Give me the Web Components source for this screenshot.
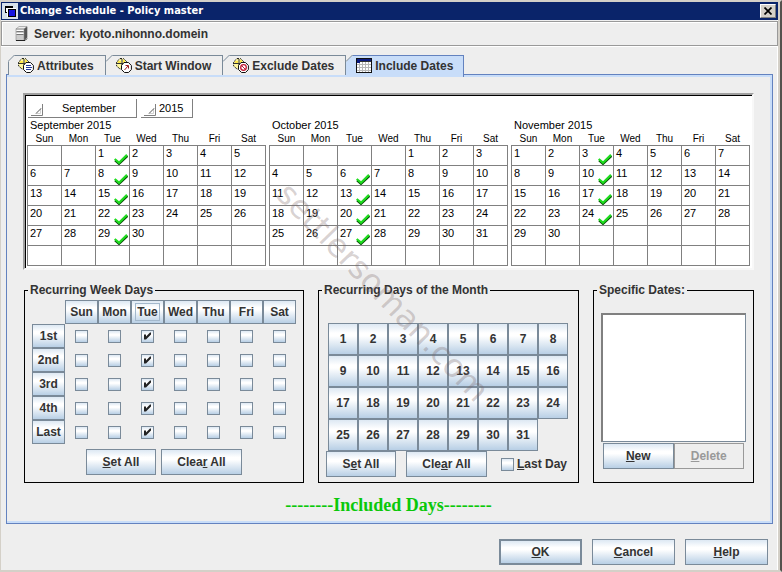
<!DOCTYPE html>
<html lang="en">
<head>
<meta charset="utf-8">
<title>Change Schedule - Policy master</title>
<style>
  body {
    margin: 0;
    font: bold 12px/14px "Liberation Sans", Arial, sans-serif;
    color: #333;
    --face: #eee;
    --edge: #7a8a99;
    --metal: linear-gradient(#dde8f3 0%, #fff 30%, #fff 40%, #b8cfe5 100%);
  }
</style>
</head>
<body>
<schedule-window></schedule-window>

<script>
// ---------- push button ----------
class MetalButton extends HTMLElement {
  constructor() {
    super();
    this.attachShadow({ mode: "open" });
  }
  connectedCallback() {
    const disabled = this.hasAttribute("disabled") ? "disabled" : "";
    this.shadowRoot.innerHTML = `
      <style>
        :host { display: grid; }
        button {
          font: inherit;
          color: inherit;
          margin: 0;
          padding: 0;
          min-width: 0;
          border: 1px solid var(--edge);
          background: var(--metal);
        }
        :host([primary]) button { border-width: 2px; }
        :host([focused]) span { outline: 1px solid #a3b8cc; outline-offset: 1px; }
        button:disabled { color: #999; background: var(--face); border-color: #999; }
      </style>
      <button type="button" ${disabled}><span><slot></slot></span></button>
    `;
  }
}
customElements.define("metal-button", MetalButton);

// ---------- tick box ----------
class MetalCheck extends HTMLElement {
  constructor() {
    super();
    this.attachShadow({ mode: "open" });
  }
  connectedCallback() {
    const checked = this.hasAttribute("checked") ? "checked" : "";
    const name = this.getAttribute("name") || "";
    const aria = name ? `aria-label="${name}"` : "";
    this.shadowRoot.innerHTML = `
      <style>
        :host { display: block; }
        label { display: flex; align-items: center; gap: 3px; }
        input {
          appearance: none;
          flex: none;
          width: 13px;
          height: 13px;
          margin: 0;
          border: 1px solid var(--edge);
          background: var(--metal);
        }
        input:checked::before {
          content: "";
          display: block;
          width: 11px;
          height: 11px;
          background: #222;
          clip-path: polygon(2px 4px, 4px 4px, 4px 6px, 8px 2px, 9px 2px, 9px 4px, 4px 9px, 2px 9px);
        }
      </style>
      <label><input type="checkbox" ${aria} ${checked}><slot></slot></label>
    `;
  }
}
customElements.define("metal-check", MetalCheck);

// ---------- title bar ----------
class TitleBar extends HTMLElement {
  constructor() {
    super();
    this.attachShadow({ mode: "open" });
    this.shadowRoot.innerHTML = `
      <style>
        :host {
          display: flex;
          align-items: center;
          gap: 2px;
          height: 18px;
          padding: 0 2px 0 1px;
          background: #0a246a;
          color: #fff;
          font: bold 11px/14px "DejaVu Sans Condensed", "DejaVu Sans", sans-serif;
        }
        h1 { flex: 1; margin: 0; font: inherit; }
        button {
          display: grid;
          place-items: center;
          width: 16px;
          height: 14px;
          padding: 0;
          border: 1px solid;
          border-color: #fff #808080 #808080 #fff;
          background: #d4d0c8;
        }
      </style>
      <svg width="16" height="16" aria-hidden="true" shape-rendering="crispEdges">
        <rect width="16" height="16" fill="#d6e0ea"/>
        <rect x="3" y="3" width="8" height="7" fill="#000"/>
        <rect x="4" y="5" width="3" height="4" fill="#fff"/>
        <rect x="5" y="5" width="9" height="9" fill="#fff"/>
        <rect x="6" y="6" width="8" height="8" fill="#000"/>
        <rect x="7" y="7" width="6" height="6" fill="#1414e0"/>
      </svg>
      <h1><slot></slot></h1>
      <button type="button" aria-label="Close">
        <svg width="8" height="8" viewBox="0 0 8 8"><path d="M0.5 0.5L7.5 7.5M7.5 0.5L0.5 7.5" stroke="#000" stroke-width="1.7"/></svg>
      </button>
    `;
  }
}
customElements.define("title-bar", TitleBar);

// ---------- server line ----------
class ServerBar extends HTMLElement {
  constructor() {
    super();
    this.attachShadow({ mode: "open" });
    this.shadowRoot.innerHTML = `
      <style>
        :host {
          display: flex;
          align-items: center;
          gap: 4px;
          height: 23px;
          margin-top: 1px;
          padding: 0 13px;
          border: 1px solid #999;
          box-shadow: inset 1px 1px #fff, 0 1px #fff;
        }
        svg { margin-right: 2px; }
      </style>
      <svg width="13" height="15" viewBox="0 0 13 15" aria-hidden="true">
        <path d="M1 3L4 0.5H12L9 3Z" fill="#eee" stroke="#888" stroke-width=".6"/>
        <path d="M9 3L12.3 0.6V11.5L9 14.5Z" fill="#555"/>
        <rect x="1" y="3" width="8" height="11.5" fill="#ccc" stroke="#888" stroke-width=".6"/>
        <path d="M1.5 5.5H8.5M1.5 8.5H8.5" stroke="#777"/>
        <path d="M1.5 4.5H8.5M1.5 7.5H8.5" stroke="#fff"/>
        <path d="M1 14.5H10L12 12.5" stroke="#222" fill="none"/>
      </svg>
      <span>Server:</span>
      <slot></slot>
    `;
  }
}
customElements.define("server-bar", ServerBar);

// ---------- tabs ----------
const clock = `
  <path d="M4 0.6H7.5L11 4V8L8 11H4L0.6 8V4Z" fill="#fff7a0" stroke="#111" stroke-dasharray="2 1"/>
  <path d="M6 1V10M1 5.5H10" stroke="#333"/>
  <path d="M2 3H5V5H2ZM7 2H9V5H7Z" fill="#ffe94a"/>
  <path d="M8 4.5H12.5L15.4 7.5V11.5L12.5 14.5H8.5L5.5 11.5V7.5Z" fill="#fff" stroke="#111"/>`;
const tabIcons = {
  list: clock + `<path d="M8 7.5H13M8 9.5H14M8 11.5H13" stroke="#223a9a"/>`,
  start: clock + `<path d="M8.5 12L12 8M9.5 7.5H12.5V10.5" stroke="#a02020" fill="none"/>`,
  exclude: clock + `<circle cx="10.5" cy="9.5" r="2.8" fill="#fff" stroke="#c01830" stroke-width="1.3"/><path d="M8.7 7.7L12.3 11.3" stroke="#c01830"/>`,
  calendar: `
    <rect x=".5" y=".5" width="15" height="14" fill="#fff" stroke="#111"/>
    <rect x="1" y="1" width="14" height="2" fill="#0a1a80"/>
    <rect x="1" y="3" width="14" height="1" fill="#333"/>
    <path d="M1 6.5H15M1 9.5H15M1 12.5H15M3.5 4V14M6.5 4V14M9.5 4V14M12.5 4V14" stroke="#b8b8b8"/>
    <path d="M1 5H4V1H1Z" fill="#0a1a80"/>`
};

class TabItem extends HTMLElement {
  constructor() {
    super();
    this.attachShadow({ mode: "open" });
  }
  connectedCallback() {
    const selected = this.hasAttribute("selected");
    this.shadowRoot.innerHTML = `
      <style>
        :host { display: grid; position: relative; }
        button {
          display: flex;
          align-items: center;
          gap: 3px;
          height: 20px;
          padding: 0 11px 0 10px;
          font: inherit;
          color: inherit;
          border: solid var(--edge);
          border-width: 1px 1px 0 0;
          background: var(--face);
          white-space: nowrap;
        }
        :host([first]) button { border-left-width: 1px; padding-left: 9px; }
        :host([selected]) button {
          background: #c8ddf9;
          border-color: #6382bf;
          height: 22px;
          padding: 0 10px 2px;
        }
        .corner { position: absolute; left: 0; top: 0; }
      </style>
      <button type="button" role="tab" aria-selected="${selected}">
        <svg width="16" height="16" viewBox="0 0 16 16" aria-hidden="true">${tabIcons[this.getAttribute("icon")]}</svg>
        <slot></slot>
      </button>
      <svg class="corner" width="7" height="7" aria-hidden="true">
        <path d="M0 0H7L0 7Z" fill="#eee"/><path d="M0 6.5L6.5 0" stroke="#7a8a99"/>
      </svg>
    `;
  }
}
customElements.define("tab-item", TabItem);

class TabStrip extends HTMLElement {
  constructor() {
    super();
    this.attachShadow({ mode: "open" });
    this.shadowRoot.innerHTML = `
      <style>
        :host { display: block; margin: 9px 5px 0; }
        div { display: flex; align-items: flex-start; height: 19px; padding-left: 2px; position: relative; z-index: 1; }
      </style>
      <div role="tablist"><slot></slot></div>
    `;
  }
}
customElements.define("tab-strip", TabStrip);

// ---------- bevelled drop-down of the calendar ----------
class CornerSelect extends HTMLElement {
  constructor() {
    super();
    this.attachShadow({ mode: "open" });
  }
  connectedCallback() {
    const value = this.getAttribute("value");
    this.shadowRoot.innerHTML = `
      <style>
        :host { display: block; }
        label {
          display: flex;
          align-items: center;
          height: 18px;
          padding-left: 3px;
          border: solid #808080;
          border-width: 0 1px 1px 0;
        }
        svg { flex: none; margin-top: 3px; }
        select {
          appearance: none;
          flex: 1;
          min-width: 0;
          height: 16px;
          padding: 0 0 0 var(--indent, 3px);
          border: 0;
          background: none;
          color: #000;
          font: inherit;
        }
      </style>
      <label>
        <svg width="12" height="12" aria-hidden="true">
          <path d="M0 11.5H11.5V0" stroke="#808080" fill="none"/>
          <path d="M5 9.5H9.5V4" stroke="#d0d0d0" fill="none"/><path d="M5 9.5L10 4.5" stroke="#555"/>
        </svg>
        <select aria-label="${this.getAttribute("name")}"><option>${value}</option></select>
      </label>
    `;
  }
}
customElements.define("corner-select", CornerSelect);

// ---------- one month ----------
const dayNames = ["Sun", "Mon", "Tue", "Wed", "Thu", "Fri", "Sat"];

class MonthCalendar extends HTMLElement {
  constructor() {
    super();
    this.attachShadow({ mode: "open" });
  }
  connectedCallback() {
    const offset = Number(this.getAttribute("offset"));
    const days = Number(this.getAttribute("days"));
    const marked = this.getAttribute("marked").split(",").map(Number);
    const tick = `<svg width="14" height="11" viewBox="0 0 14 11" aria-hidden="true"><path d="M1 6.5L5 10L13.5 2" stroke="#064d06" stroke-width="2" fill="none"/><path d="M0.7 5L5 8.7L13 0.9" stroke="#1fdc1f" stroke-width="2.2" fill="none"/></svg>`;
    let rows = "";
    for (let r = 0; r < 6; r++) {
      rows += "<tr>";
      for (let c = 0; c < 7; c++) {
        const d = r * 7 + c - offset + 1;
        const shown = d >= 1 && d <= days;
        rows += `<td>${shown ? d : ""}${marked.includes(d) ? tick : ""}</td>`;
      }
      rows += "</tr>";
    }
    this.shadowRoot.innerHTML = `
      <style>
        :host { display: block; }
        table { width: 100%; table-layout: fixed; border-collapse: collapse; }
        caption { height: 14px; padding-left: 3px; text-align: left; }
        th { height: 13px; padding: 0; font-weight: normal; font-size: 10px; line-height: 13px; }
        td {
          position: relative;
          height: 19px;
          padding: 0 0 0 2px;
          border: 1px solid #808080;
          vertical-align: top;
          line-height: 14px;
        }
        svg { position: absolute; right: 1px; bottom: 0; }
      </style>
      <table>
        <caption><slot></slot></caption>
        <thead><tr>${dayNames.map((d) => `<th>${d}</th>`).join("")}</tr></thead>
        <tbody>${rows}</tbody>
      </table>
    `;
  }
}
customElements.define("month-calendar", MonthCalendar);

class CalendarPane extends HTMLElement {
  constructor() {
    super();
    this.attachShadow({ mode: "open" });
    this.shadowRoot.innerHTML = `
      <style>
        :host {
          display: block;
          padding: 2px;
          border: 2px solid;
          border-color: #a0a0a0 #f8f8f8 #f8f8f8 #a0a0a0;
          box-shadow: inset 1px 1px #000;
          background: #fff;
          color: #000;
          font-weight: normal;
          font-size: 11px;
        }
        .pick { display: flex; gap: 4px; padding: 2px 1px 0; }
        .month { width: 109px; --indent: 19px; }
        .year { width: 52px; }
        .months { display: grid; grid-template-columns: repeat(3, 1fr); gap: 3px; }
      </style>
      <div class="pick">
        <corner-select class="month" name="Month" value="September"></corner-select>
        <corner-select class="year" name="Year" value="2015"></corner-select>
      </div>
      <div class="months">
        <month-calendar offset="2" days="30" marked="1,8,15,22,29">September 2015</month-calendar>
        <month-calendar offset="4" days="31" marked="6,13,20,27">October 2015</month-calendar>
        <month-calendar offset="0" days="30" marked="3,10,17,24">November 2015</month-calendar>
      </div>
    `;
  }
}
customElements.define("calendar-pane", CalendarPane);

// ---------- titled box ----------
class GroupBox extends HTMLElement {
  constructor() {
    super();
    this.attachShadow({ mode: "open" });
    this.shadowRoot.innerHTML = `
      <style>
        :host { display: grid; }
        fieldset {
          min-width: 0;
          margin: 0;
          padding: 0 7px 5px;
          border: 1px solid #000;
        }
        legend { margin-left: -4px; padding: 0 2px; }
      </style>
      <fieldset><legend><slot name="title"></slot></legend><slot></slot></fieldset>
    `;
  }
}
customElements.define("group-box", GroupBox);

class WeekPicker extends HTMLElement {
  constructor() {
    super();
    this.attachShadow({ mode: "open" });
    let cells = "<span></span>";
    dayNames.forEach((d) => {
      cells += `<metal-button ${d === "Tue" ? "focused" : ""}>${d}</metal-button>`;
    });
    ["1st", "2nd", "3rd", "4th", "Last"].forEach((week) => {
      cells += `<metal-button>${week}</metal-button>`;
      dayNames.forEach((d) => {
        cells += `<metal-check name="${week} ${d}" ${d === "Tue" ? "checked" : ""}></metal-check>`;
      });
    });
    this.shadowRoot.innerHTML = `
      <style>
        :host { display: block; }
        .grid {
          display: grid;
          grid-template-columns: repeat(8, 1fr);
          grid-auto-rows: 24px;
          margin-top: 3px;
        }
        metal-check { place-self: center; }
        .actions {
          display: flex;
          justify-content: center;
          gap: 5px;
          margin-top: 5px;
        }
        .actions metal-button { height: 26px; width: 70px; }
        .actions metal-button + metal-button { width: 81px; }
      </style>
      <div class="grid">${cells}</div>
      <div class="actions">
        <metal-button><u>S</u>et All</metal-button>
        <metal-button>Clea<u>r</u> All</metal-button>
      </div>
    `;
  }
}
customElements.define("week-picker", WeekPicker);

class MonthDayPicker extends HTMLElement {
  constructor() {
    super();
    this.attachShadow({ mode: "open" });
    let cells = "";
    for (let d = 1; d <= 31; d++) cells += `<metal-button>${d}</metal-button>`;
    this.shadowRoot.innerHTML = `
      <style>
        :host { display: block; }
        .grid {
          display: grid;
          grid-template-columns: repeat(8, 1fr);
          grid-auto-rows: 32px;
          margin: 26px 3px 0 2px;
        }
        .actions { display: flex; align-items: center; gap: 10px; }
        .actions metal-button { height: 26px; width: 70px; }
        .actions metal-button + metal-button { width: 81px; }
        metal-check { margin-left: 4px; white-space: nowrap; }
      </style>
      <div class="grid">${cells}</div>
      <div class="actions">
        <metal-button>S<u>e</u>t All</metal-button>
        <metal-button>Cle<u>a</u>r All</metal-button>
        <metal-check><span><u>L</u>ast Day</span></metal-check>
      </div>
    `;
  }
}
customElements.define("month-day-picker", MonthDayPicker);

class DateList extends HTMLElement {
  constructor() {
    super();
    this.attachShadow({ mode: "open" });
    this.shadowRoot.innerHTML = `
      <style>
        :host { display: block; }
        .list {
          height: 126px;
          margin-top: 16px;
          border: solid;
          border-width: 2px 1px 1px 2px;
          border-color: #808080 var(--edge) var(--edge) #808080;
          background: #fff;
        }
        .actions { display: grid; grid-template-columns: 1fr 1fr; grid-auto-rows: 26px; margin: 1px 2px 0; }
      </style>
      <div class="list" role="listbox" aria-label="Specific Dates"></div>
      <div class="actions">
        <metal-button><u>N</u>ew</metal-button>
        <metal-button disabled><u>D</u>elete</metal-button>
      </div>
    `;
  }
}
customElements.define("date-list", DateList);

// ---------- the dialog ----------
class ScheduleWindow extends HTMLElement {
  constructor() {
    super();
    this.attachShadow({ mode: "open" });
    this.shadowRoot.innerHTML = `
      <style>
        :host {
          display: flex;
          flex-direction: column;
          position: relative;
          box-sizing: border-box;
          min-height: 100vh;
          overflow: hidden;
          padding-right: 2px;
          border: solid #d4d0c8;
          border-width: 2px 2px 2px 1px;
          border-right-color: #55524e;
          box-shadow: inset -2px 0 #d4d0c8, inset -3px 0 #fff;
          background: var(--face);
        }
        main {
          flex: 1;
          margin: 0 5px;
          padding: 18px 18px 0 16px;
          border: 1px solid #6382bf;
          box-shadow: inset 0 2px #c8ddf9, inset -2px -2px #c8ddf9;
        }
        .groups {
          display: grid;
          grid-template-columns: 280fr 261fr 161fr;
          gap: 14px;
          margin: 13px 0 0 1px;
        }
        .mode {
          margin: 12px 0 0;
          text-align: center;
          color: #0ac80a;
          font: bold 18px/20px "Liberation Serif", "Times New Roman", serif;
        }
        footer {
          display: flex;
          justify-content: flex-end;
          gap: 10px;
          padding: 15px 10px 5px;
        }
        footer metal-button { width: 83px; height: 26px; }
        .mark {
          position: absolute;
          left: 49%;
          top: 51%;
          transform: translate(-50%, -50%) rotate(46deg);
          color: rgba(120, 100, 100, .3);
          font: 32px/36px "DejaVu Sans", Verdana, sans-serif;
          pointer-events: none;
        }
      </style>
      <title-bar>Change Schedule - Policy master</title-bar>
      <server-bar>kyoto.nihonno.domein</server-bar>
      <tab-strip>
        <tab-item icon="list" first>Attributes</tab-item>
        <tab-item icon="start">Start Window</tab-item>
        <tab-item icon="exclude">Exclude Dates</tab-item>
        <tab-item icon="calendar" selected>Include Dates</tab-item>
      </tab-strip>
      <main>
        <calendar-pane></calendar-pane>
        <div class="groups">
          <group-box><span slot="title">Recurring Week Days</span><week-picker></week-picker></group-box>
          <group-box><span slot="title">Recurring Days of the Month</span><month-day-picker></month-day-picker></group-box>
          <group-box><span slot="title">Specific Dates:</span><date-list></date-list></group-box>
        </div>
        <p class="mode">--------Included Days--------</p>
      </main>
      <footer>
        <metal-button primary><u>O</u>K</metal-button>
        <metal-button><u>C</u>ancel</metal-button>
        <metal-button><u>H</u>elp</metal-button>
      </footer>
      <div class="mark">settlersoman.com</div>
    `;
  }
}
customElements.define("schedule-window", ScheduleWindow);
</script>
</body>
</html>
